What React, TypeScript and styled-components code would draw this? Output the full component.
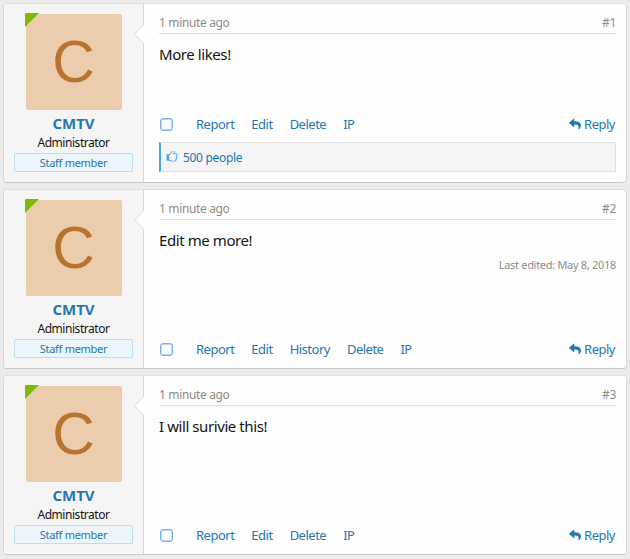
import React from "react";
import styled, { createGlobalStyle } from "styled-components";
import { FaReply } from "react-icons/fa";

const GlobalStyle = createGlobalStyle`
  * { box-sizing: border-box; }
  body {
    margin: 0;
    background: #ebebeb;
    color: #141414;
    font-family: "Noto Sans", "Open Sans", sans-serif;
    overflow: hidden;
  }
`;

const Thread = styled.main`
  display: flex;
  flex-direction: column;
  gap: 6px;
  height: 559px;
  padding: 3px;
`;

const Post = styled.article`
  display: flex;
  height: 180px;
  flex: none;
  background: #fefefe;
  border: 1px solid #d8d8d8;
  border-top-color: #e0e0e0;
  border-bottom-color: #c8c8c8;
  border-radius: 4px;
`;

const UserCell = styled.aside`
  position: relative;
  display: flex;
  flex-direction: column;
  align-items: center;
  width: 140px;
  padding: 10px 10px 0;
  background: #f5f5f5;
  border-right: 1px solid #d8d8d8;
  border-radius: 3px 0 0 3px;
`;

const Notch = styled.svg`
  position: absolute;
  top: 20px;
  right: -1px;
  display: block;
`;

const Avatar = styled.div`
  position: relative;
  width: 96px;
  height: 96px;
  flex: none;
  background: #ebccad;
  border-radius: 2px;
  color: #b8732e;
  font-family: "Liberation Sans", Arial, sans-serif;
  font-size: 59px;
  line-height: 96px;
  text-align: center;
`;

const AvatarLetter = styled.span`
  display: block;
`;

const OnlineMark = styled.span`
  position: absolute;
  top: -1px;
  left: -1px;
  border: 7px solid transparent;
  border-top-color: #7fb900;
  border-left-color: #7fb900;
  border-top-left-radius: 2px;
`;

const UserName = styled.a`
  height: 22px;
  margin-top: 2px;
  color: #2577b1;
  font-size: 15px;
  font-weight: 700;
  line-height: 23px;
`;

const UserTitle = styled.div`
  height: 19px;
  font-size: 12px;
  line-height: 18px;
  letter-spacing: -0.45px;
`;

const StaffBanner = styled.div`
  width: 119px;
  height: 19px;
  border: 1px solid #b9def5;
  border-radius: 2px;
  background: #edf6fd;
  color: #2577b1;
  font-size: 11px;
  line-height: 18px;
  letter-spacing: -0.3px;
  text-align: center;
`;

const Content = styled.section`
  display: flex;
  flex: 1;
  flex-direction: column;
  min-width: 0;
  padding: 10px 10px 10px 15px;
`;

const PostHeader = styled.header`
  display: flex;
  justify-content: space-between;
  height: 20px;
  flex: none;
  border-bottom: 1px solid #e0e0e0;
  color: #8c8c8c;
  font-size: 12px;
  line-height: 18px;
  letter-spacing: -0.35px;
`;

const Message = styled.div`
  margin-top: 9px;
  font-size: 15px;
  line-height: 23px;
  letter-spacing: -0.42px;
`;

const Edited = styled.div`
  margin-top: 5px;
  color: #8c8c8c;
  font-size: 11px;
  line-height: 16px;
  letter-spacing: -0.3px;
  text-align: right;
`;

const Actions = styled.footer`
  display: flex;
  align-items: center;
  gap: 17px;
  height: 18px;
  margin-top: auto;
`;

const Checkbox = styled.span`
  width: 13px;
  height: 13px;
  margin: 0 6px 0 1px;
  border: 1px solid #77adf0;
  border-radius: 3px;
  box-shadow: inset 0 0 0 0.4px #77adf0;
`;

const ActionLink = styled.a`
  color: #2577b1;
  font-size: 13px;
  line-height: 18px;
  letter-spacing: -0.5px;
`;

const ReplyLink = styled(ActionLink)`
  display: flex;
  align-items: center;
  gap: 3px;
  margin-right: 1px;
  margin-left: auto;

  svg {
    margin-bottom: 1px;
  }
`;

const Likes = styled.div`
  display: flex;
  align-items: center;
  gap: 5px;
  height: 30px;
  flex: none;
  margin-top: 9px;
  padding-left: 5px;
  border: 1px solid #e0e0e0;
  border-left: 2px solid #47a7eb;
  background: #f5f5f5;
  color: #2577b1;
  font-size: 12px;
  letter-spacing: -0.32px;
`;

const LikeIcon = () => (
  <svg width="12" height="12" viewBox="64 64 1664 1664" fill="#47a7eb">
    <path d="M256 1408q0-26-19-45t-45-19-45 19-19 45 19 45 45 19 45-19 19-45zm1280-768q0-51-39-89.5t-89-38.5h-352q0-58 48-159.5t48-160.5q0-98-32-145t-128-47q-26 26-38 85t-30.5 125.5-59.5 109.5q-22 23-77 91-4 5-23 30t-31.5 41-34.5 42.5-40 44-38.5 35.5-40 27-35.5 9h-32v640h32q13 0 31.5 3t33 6.5 38 11 35 11.5 35.5 12.5 29 10.5q211 73 342 73h121q192 0 192-167 0-26-5-56 30-16 47.5-52.5t17.5-73.5-18-69q53-50 53-119 0-25-10-55.5t-25-47.5q32-1 53.5-47t21.5-81zm128-1q0 89-49 163 9 33 9 69 0 77-38 144 3 21 3 43 0 101-60 178 1 139-85 219.5t-227 80.5h-129q-96 0-189.5-22.5t-216.5-65.5q-116-40-138-40h-288q-53 0-90.5-37.5t-37.5-90.5v-640q0-53 37.5-90.5t90.5-37.5h274q36-24 137-155 58-75 107-128 24-25 35.5-85.5t30.5-126.5 62-108q39-37 90-37 84 0 151 32.5t102 101.5 35 186q0 93-48 192h176q104 0 180 76t76 179z" />
  </svg>
);

type PostData = {
  id: number;
  message: string;
  actions: string[];
  edited?: string;
  likes?: string;
};

const posts: PostData[] = [
  { id: 1, message: "More likes!", actions: ["Report", "Edit", "Delete", "IP"], likes: "500 people" },
  {
    id: 2,
    message: "Edit me more!",
    actions: ["Report", "Edit", "History", "Delete", "IP"],
    edited: "Last edited: May 8, 2018",
  },
  { id: 3, message: "I will surivie this!", actions: ["Report", "Edit", "Delete", "IP"] },
];

export default function App() {
  return (
    <>
      <GlobalStyle />
      <Thread>
        {posts.map((post) => (
          <Post key={post.id}>
            <UserCell>
              <Avatar>
                <AvatarLetter>C</AvatarLetter>
                <OnlineMark />
              </Avatar>
              <UserName>CMTV</UserName>
              <UserTitle>Administrator</UserTitle>
              <StaffBanner>Staff member</StaffBanner>
              <Notch width="10" height="20" viewBox="0 0 10 20">
                <path d="M10 0.5L0.7 10L10 19.5Z" fill="#fefefe" />
                <path d="M9.5 1L0.7 10L9.5 19" fill="none" stroke="#dedede" />
              </Notch>
            </UserCell>
            <Content>
              <PostHeader>
                <span>1 minute ago</span>
                <span>#{post.id}</span>
              </PostHeader>
              <Message>{post.message}</Message>
              {post.edited && <Edited>{post.edited}</Edited>}
              <Actions>
                <Checkbox />
                {post.actions.map((action) => (
                  <ActionLink key={action}>{action}</ActionLink>
                ))}
                <ReplyLink>
                  <FaReply size={12} />
                  Reply
                </ReplyLink>
              </Actions>
              {post.likes && (
                <Likes>
                  <LikeIcon />
                  {post.likes}
                </Likes>
              )}
            </Content>
          </Post>
        ))}
      </Thread>
    </>
  );
}
